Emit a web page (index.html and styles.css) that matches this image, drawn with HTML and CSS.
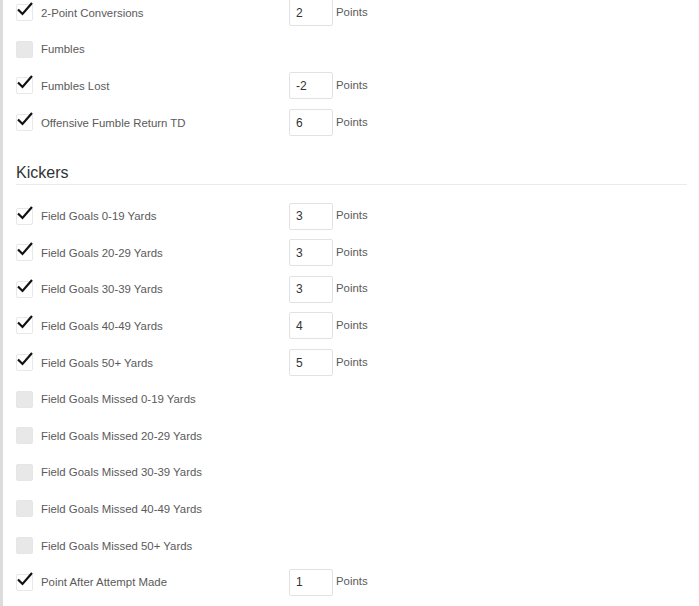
FILE: index.html
```html
<!DOCTYPE html>
<html lang="en">
<head>
	<meta charset="UTF-8">
	<title>Scoring settings</title>
	<link rel="stylesheet" href="styles.css">
</head>
<body>
	<div id="wrapper">
		<ul class="rules first">
			<li class="rule on"><span class="box"></span><span class="label">2-Point Conversions</span><input class="pts" value="2"><span class="unit">Points</span></li>
			<li class="rule"><span class="box"></span><span class="label">Fumbles</span></li>
			<li class="rule on"><span class="box"></span><span class="label">Fumbles Lost</span><input class="pts" value="-2"><span class="unit">Points</span></li>
			<li class="rule on"><span class="box"></span><span class="label">Offensive Fumble Return TD</span><input class="pts" value="6"><span class="unit">Points</span></li>
		</ul>

		<h3 class="section">Kickers</h3>
		<ul class="rules">
			<li class="rule on"><span class="box"></span><span class="label">Field Goals 0-19 Yards</span><input class="pts" value="3"><span class="unit">Points</span></li>
			<li class="rule on"><span class="box"></span><span class="label">Field Goals 20-29 Yards</span><input class="pts" value="3"><span class="unit">Points</span></li>
			<li class="rule on"><span class="box"></span><span class="label">Field Goals 30-39 Yards</span><input class="pts" value="3"><span class="unit">Points</span></li>
			<li class="rule on"><span class="box"></span><span class="label">Field Goals 40-49 Yards</span><input class="pts" value="4"><span class="unit">Points</span></li>
			<li class="rule on"><span class="box"></span><span class="label">Field Goals 50+ Yards</span><input class="pts" value="5"><span class="unit">Points</span></li>
			<li class="rule"><span class="box"></span><span class="label">Field Goals Missed 0-19 Yards</span></li>
			<li class="rule"><span class="box"></span><span class="label">Field Goals Missed 20-29 Yards</span></li>
			<li class="rule"><span class="box"></span><span class="label">Field Goals Missed 30-39 Yards</span></li>
			<li class="rule"><span class="box"></span><span class="label">Field Goals Missed 40-49 Yards</span></li>
			<li class="rule"><span class="box"></span><span class="label">Field Goals Missed 50+ Yards</span></li>
			<li class="rule on"><span class="box"></span><span class="label">Point After Attempt Made</span><input class="pts" value="1"><span class="unit">Points</span></li>
		</ul>
	</div>
	<script>
		// draw the tick in every checked box
		document.querySelectorAll('.rule.on .box').forEach(function(box) {
			box.innerHTML = '<svg class="tick" width="18" height="16" viewBox="0 0 18 16"><path d="M2 8.5 L6.5 13 L16 2" fill="none" stroke="#111" stroke-width="2.2"/></svg>'
		})
	</script>
</body>
</html>
```

FILE: styles.css
```css
html,
body {
	margin: 0;
	padding: 0;
	background: #fff;
}
body {
	font-family: "Liberation Sans", Arial, sans-serif;
	font-size: 11.4px;
	color: #5a5a5a;
	overflow: hidden;
}
#wrapper {
	border-left: 3px solid #dcdcdc;
	padding: 0 12px 0 13px;
	min-height: 640px;
}
.rules {
	list-style: none;
	margin: 0;
	padding: 0;
}
.rules.first {
	margin-top: -5.5px;
}
.rule {
	display: flex;
	align-items: center;
	height: 36.6px;
}
.box {
	position: relative;
	flex: none;
	width: 15px;
	height: 15px;
	border: 1px solid #e6e6e6;
	border-radius: 2px;
	background: #e8e8e8;
	margin-right: 8px;
}
.rule.on .box {
	background: #fff;
	border-color: #e8e8e8;
}
.tick {
	position: absolute;
	left: -1px;
	top: -4px;
}
.label {
	width: 248px;
	flex: none;
}
.pts {
	box-sizing: border-box;
	width: 44px;
	height: 27px;
	margin: 0 3px 0 0;
	padding: 0 6px;
	border: 1px solid #e2e2e2;
	border-radius: 2px;
	font-family: inherit;
	font-size: 12px;
	color: #333;
	outline: none;
}
.unit {
	position: relative;
	top: -1px;
}
.section {
	margin: 22px 0 0;
	padding-bottom: 1px;
	border-bottom: 1px solid #eaeaea;
	font-size: 16px;
	line-height: 20px;
	font-weight: normal;
	color: #333;
}
.section + .rules {
	margin-top: 13px;
}
```
